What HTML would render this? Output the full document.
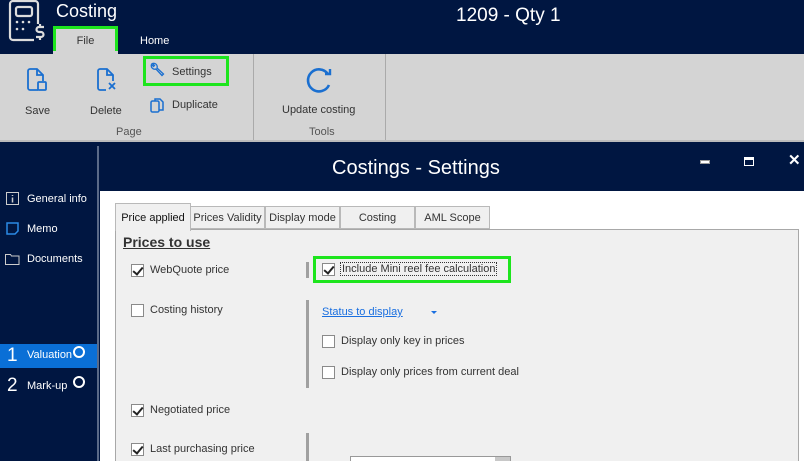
<!DOCTYPE html>
<html><head><style>
*{margin:0;padding:0;box-sizing:border-box}
html{overflow:hidden;width:804px;height:461px}
body{width:804px;height:461px;overflow:hidden;position:relative;background:#001641;font-family:"Liberation Sans",sans-serif;font-size:11px;color:#333}
.a{position:absolute}
.w{color:#fff}
.cb{position:absolute;width:13px;height:13px;border:1px solid #8a8a8a;background:#fff}
.cb.c::after{content:"";position:absolute;left:3px;top:0px;width:4px;height:8px;border:solid #222;border-width:0 2px 2px 0;transform:rotate(40deg)}
.lbl{position:absolute;font-size:11px;color:#333}
.tab{position:absolute;top:206px;height:23px;border:1px solid #b9b9b9;background:#f0f0f0;font-size:11px;text-align:center;line-height:22px;color:#333}
.vb{position:absolute;width:3px;background:#a0a0a0}
</style></head><body>
<svg class="a" style="left:6px;top:0" width="40" height="46" viewBox="0 0 40 46"><g fill="none" stroke="#ddd" stroke-width="2.2"><path d="M28 40H7a3 3 0 0 1-3-3V4a3 3 0 0 1 3-3h22a3 3 0 0 1 3 3v20"/><rect x="10" y="7" width="16" height="9" rx="2"/><path d="M38 27h-5a2 2 0 0 0 0 5h2a2 2 0 0 1 0 5h-5M34 24v3M34 37v3"/></g><g fill="#ddd"><circle cx="11" cy="22" r="1.3"/><circle cx="17" cy="22" r="1.3"/><circle cx="23" cy="22" r="1.3"/><circle cx="11" cy="29" r="1.3"/><circle cx="17" cy="29" r="1.3"/></g></svg>
<div class="a w" style="left:56px;top:1px;font-size:18px">Costing</div>
<div class="a w" style="left:456px;top:5px;font-size:19px">1209 - Qty 1</div>
<div class="a" style="left:53px;top:26px;width:65px;height:31px;background:#d4d4d4;border:3px solid #1de51d;text-align:center;line-height:25px;color:#333;font-size:11px">File</div>
<div class="a w" style="left:140px;top:35px;font-size:11px">Home</div>
<div class="a" style="left:0;top:54px;width:804px;height:88px;background:#d4d4d4;border-bottom:2px solid #bbb"></div>
<div class="a" style="left:53px;top:51px;width:65px;height:4px;background:#d4d4d4"></div>
<div class="a" style="left:253px;top:54px;width:1px;height:86px;background:#aaa"></div>
<div class="a" style="left:385px;top:54px;width:1px;height:86px;background:#aaa"></div>
<svg class="a" style="left:26px;top:68px" width="22" height="26" viewBox="0 0 22 26"><g fill="none" stroke="#1a6fd0" stroke-width="1.8"><path d="M12 22H4a2 2 0 0 1-2-2V3a2 2 0 0 1 2-2h7l6 6v6M11 1v6h6"/><rect x="12" y="14" width="8" height="8" rx="1"/></g></svg>
<div class="lbl" style="left:25px;top:105px">Save</div>
<svg class="a" style="left:96px;top:68px" width="22" height="26" viewBox="0 0 22 26"><g fill="none" stroke="#1a6fd0" stroke-width="1.8"><path d="M10 22H4a2 2 0 0 1-2-2V3a2 2 0 0 1 2-2h7l6 6v6M11 1v6h6M13 15l6 6M19 15l-6 6"/></g></svg>
<div class="lbl" style="left:90px;top:105px">Delete</div>
<div class="a" style="left:143px;top:56px;width:86px;height:30px;border:3px solid #1de51d"></div>
<svg class="a" style="left:149px;top:62px" width="17" height="17" viewBox="0 0 17 17"><path d="M2.5 2.5a3.5 3.5 0 0 0 4.5 4.5l6 6.5 1.5-1.5-6.5-6a3.5 3.5 0 0 0-4.5-4.5l2 2-1 1z" fill="none" stroke="#1a6fd0" stroke-width="1.3"/></svg>
<div class="lbl" style="left:172px;top:66px">Settings</div>
<svg class="a" style="left:150px;top:97px" width="15" height="17" viewBox="0 0 15 17"><g fill="none" stroke="#1a6fd0" stroke-width="1.5"><rect x="1" y="4" width="8" height="11" rx="1.5"/><path d="M5 4V2h5l3 3v8H9"/></g></svg>
<div class="lbl" style="left:172px;top:99px">Duplicate</div>
<div class="lbl" style="left:116px;top:126px;color:#555">Page</div>
<svg class="a" style="left:304px;top:65px" width="32" height="32" viewBox="0 0 32 32"><path d="M25 20A11 11 0 1 1 24 9" fill="none" stroke="#1a6fd0" stroke-width="2.6"/><path d="M21 9h5V4" fill="none" stroke="#1a6fd0" stroke-width="2.4"/></svg>
<div class="lbl" style="left:282px;top:104px">Update costing</div>
<div class="lbl" style="left:309px;top:126px;color:#555">Tools</div>
<div class="a" style="left:97px;top:146px;width:2px;height:315px;background:#5a6a88"></div>
<svg class="a" style="left:6px;top:192px" width="13" height="13"><rect x="0.5" y="0.5" width="12" height="12" fill="none" stroke="#ccc"/><path d="M6.5 3v1M6.5 5.5v5" stroke="#ccc" stroke-width="1.5"/></svg>
<div class="a w" style="left:27px;top:193px">General info</div>
<svg class="a" style="left:6px;top:222px" width="13" height="13"><path d="M1 1h11v8l-3 3H1z" fill="none" stroke="#2b8ae6" stroke-width="1.5"/></svg>
<div class="a w" style="left:27px;top:223px">Memo</div>
<svg class="a" style="left:5px;top:253px" width="15" height="12"><path d="M.5 1.5h5l1 1.5h7.5v8.5H.5z" fill="none" stroke="#ccc"/></svg>
<div class="a w" style="left:27px;top:253px">Documents</div>
<div class="a" style="left:0;top:344px;width:97px;height:24px;background:#0a6fd6"></div>
<div class="a w" style="left:7px;top:345px;font-size:19px">1</div>
<div class="a w" style="left:27px;top:349px">Valuation</div>
<div class="a" style="left:73px;top:346px;width:12px;height:12px;border:2px solid #fff;border-radius:50%"></div>
<div class="a w" style="left:7px;top:375px;font-size:19px">2</div>
<div class="a w" style="left:27px;top:380px">Mark-up</div>
<div class="a" style="left:73px;top:376px;width:12px;height:12px;border:2px solid #fff;border-radius:50%"></div>
<div class="a w" style="left:332px;top:157px;font-size:20px">Costings - Settings</div>
<div class="a" style="left:700px;top:160px;width:10px;height:4px;background:#fff;border:1px solid #999"></div>
<div class="a" style="left:744px;top:157px;width:10px;height:9px;border:1px solid #fff;border-top:3px solid #fff"></div>
<div class="a w" style="left:788px;top:151px;font-size:15px;font-weight:bold">✕</div>
<div class="a" style="left:100px;top:191px;width:704px;height:270px;background:#fff"></div>
<div class="a" style="left:115px;top:229px;width:684px;height:232px;background:#f0f0f0;border:1px solid #a8a8a8;border-bottom:none"></div>
<div class="tab" style="left:190px;width:75px">Prices Validity</div>
<div class="tab" style="left:265px;width:75px">Display mode</div>
<div class="tab" style="left:340px;width:75px">Costing</div>
<div class="tab" style="left:415px;width:75px">AML Scope</div>
<div class="a" style="left:115px;top:203px;width:76px;height:28px;background:#f0f0f0;border:1px solid #b9b9b9;border-bottom:none;text-align:center;line-height:28px;font-size:11px;color:#111">Price applied</div>
<div class="a" style="left:123px;top:234px;font-size:14px;font-weight:bold;color:#333;text-decoration:underline">Prices to use</div>
<div class="cb c" style="left:131px;top:264px"></div><div class="lbl" style="left:150px;top:264px">WebQuote price</div>
<div class="cb" style="left:131px;top:304px"></div><div class="lbl" style="left:150px;top:304px">Costing history</div>
<div class="cb c" style="left:131px;top:404px"></div><div class="lbl" style="left:150px;top:404px">Negotiated price</div>
<div class="cb c" style="left:131px;top:443px"></div><div class="lbl" style="left:150px;top:443px">Last purchasing price</div>
<div class="vb" style="left:306px;top:262px;height:16px"></div>
<div class="vb" style="left:306px;top:300px;height:88px"></div>
<div class="vb" style="left:306px;top:433px;height:28px"></div>
<div class="a" style="left:313px;top:256px;width:198px;height:27px;border:3px solid #1de51d"></div>
<div class="cb c" style="left:322px;top:263px"></div>
<div class="lbl" style="left:340px;top:262px;border:1px dotted #333;padding:0 1px">Include Mini reel fee calculation</div>
<div class="lbl" style="left:322px;top:306px;color:#1a6fe0;text-decoration:underline">Status to display</div>
<div class="a" style="left:431px;top:311px;border:3px solid transparent;border-top:3px solid #1a6fe0"></div>
<div class="cb" style="left:322px;top:335px"></div><div class="lbl" style="left:341px;top:335px">Display only key in prices</div>
<div class="cb" style="left:322px;top:366px"></div><div class="lbl" style="left:341px;top:366px">Display only prices from current deal</div>
<div class="a" style="left:350px;top:456px;width:161px;height:5px;background:#fff;border:1px solid #999;border-bottom:none"></div>
<div class="a" style="left:495px;top:457px;width:15px;height:4px;background:#c8c8c8"></div>
</body></html>
